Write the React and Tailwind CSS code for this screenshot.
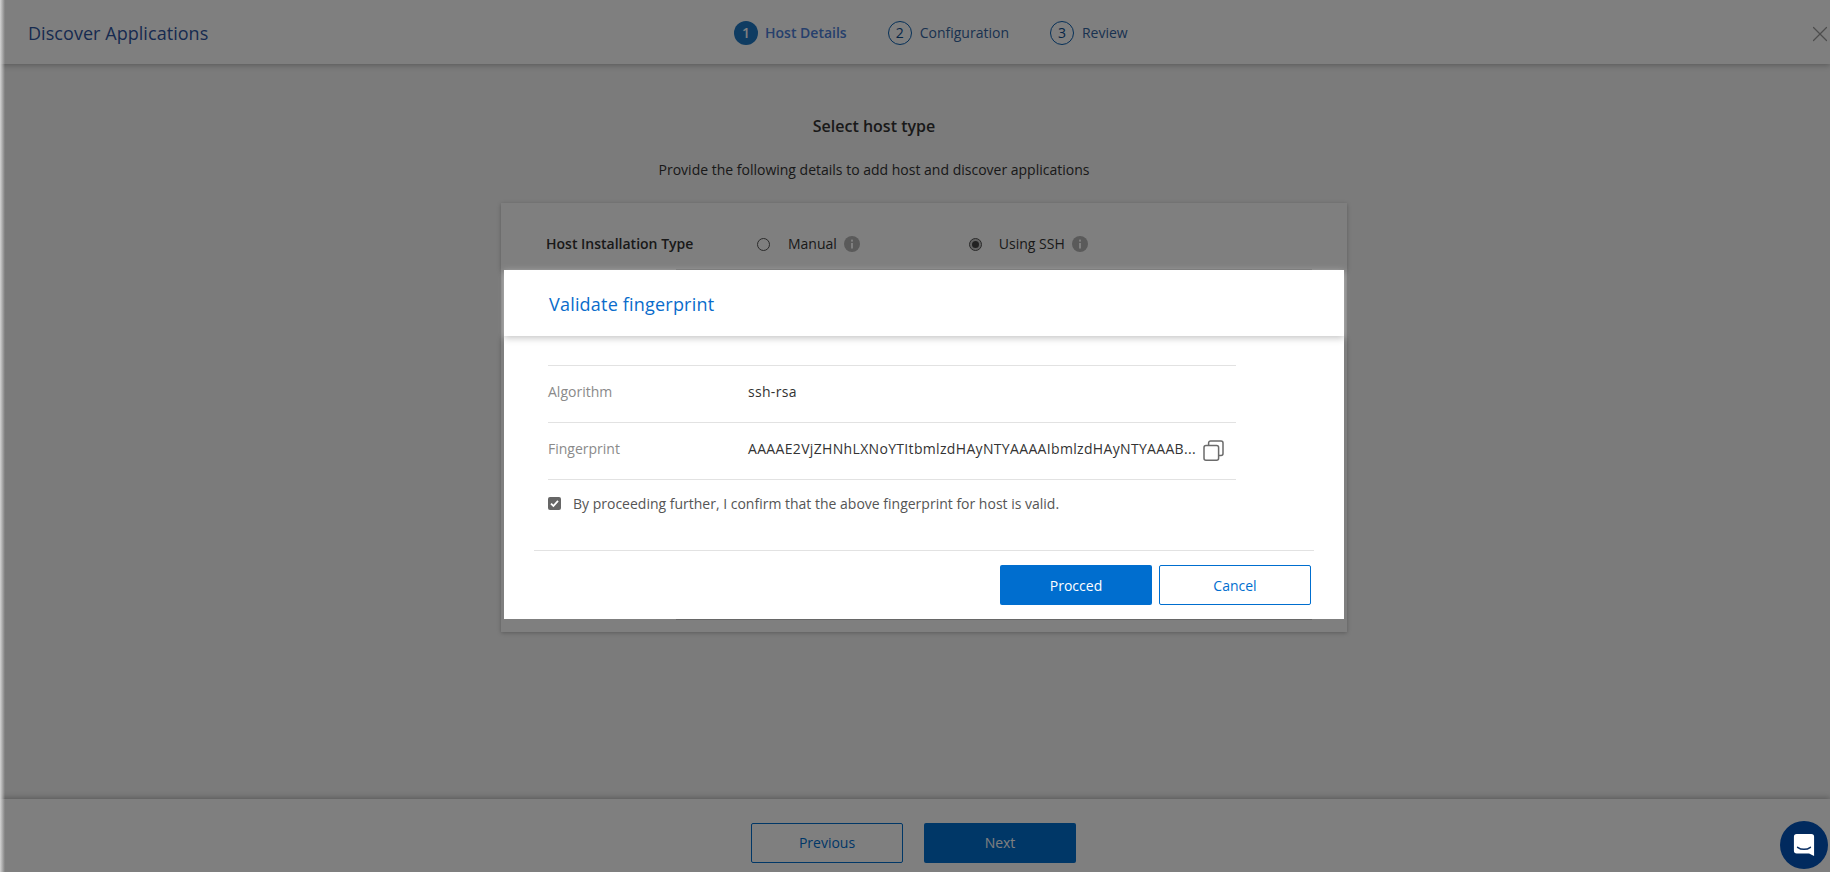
import { X } from "lucide-react";

const fingerprint = "AAAAE2VjZHNhLXNoYTItbmlzdHAyNTYAAAAIbmlzdHAyNTYAAAB...";

function Step({ num, label, active, textClass }) {
  return (
    <div className="flex items-center">
      <span
        className={`flex h-6 w-6 items-center justify-center rounded-full text-sm ${
          active ? "bg-[#1e78c4] font-semibold text-white" : "border-[1.5px] border-[#0b5fb0] text-[#0b4a8c]"
        }`}
      >
        {num}
      </span>
      <span className={`text-sm ${textClass}`}>{label}</span>
    </div>
  );
}

function InfoIcon() {
  return (
    <svg width="16" height="16" viewBox="0 0 16 16" className="shrink-0">
      <circle cx="8" cy="8" r="8" fill="#b4b4b4" />
      <rect x="7" y="7" width="2" height="5.5" fill="#ffffff" />
      <rect x="7" y="3.6" width="2" height="2" fill="#ffffff" />
    </svg>
  );
}

function Radio({ checked }) {
  return (
    <span
      className={`flex h-[13px] w-[13px] items-center justify-center rounded-full border border-[#555555] ${
        checked ? "bg-[#c4c4c4]" : "bg-white"
      }`}
    >
      {checked && <span className="h-[7px] w-[7px] rounded-full bg-[#444444]" />}
    </span>
  );
}

function CopyIcon() {
  return (
    <svg width="21" height="21" viewBox="0 0 21 21" fill="none" stroke="#6b6b6b" strokeWidth="1.5">
      <rect x="1" y="5.6" width="14.6" height="14.6" rx="2" />
      <path d="M5.6 5.6V3a2 2 0 0 1 2-2h10.4a2 2 0 0 1 2 2v10.4a2 2 0 0 1-2 2h-2.4" />
    </svg>
  );
}

function ChatIcon() {
  return (
    <svg width="22" height="24" viewBox="0 0 24 26">
      <path
        d="M4 1h16a3 3 0 0 1 3 3v21l-5.5-2.6H4a3 3 0 0 1-3-3V4a3 3 0 0 1 3-3z"
        fill="#ffffff"
      />
      <path d="M5 15.5c4 3 10 3 14 0" fill="none" stroke="#0a2f63" strokeWidth="1.6" strokeLinecap="round" />
    </svg>
  );
}

function Row({ label, children }) {
  return (
    <div className="flex h-[57px] items-center border-t border-[#e2e2e2] pb-[4px] text-sm">
      <span className="w-[200px] text-[#8a8a8a]">{label}</span>
      {children}
    </div>
  );
}

export default function App() {
  return (
    <div className="relative flex h-[872px] w-[1830px] flex-col overflow-hidden bg-[#f6f6f6] font-['Open_Sans',sans-serif] text-[#333333]">
      {/* top bar */}
      <header className="z-10 flex h-16 shrink-0 items-center bg-white pl-[28px] shadow-[0_1px_6px_rgba(0,0,0,0.3)]">
        <h1 className="mt-px w-[706px] text-lg font-medium tracking-[0.05px] text-[#2f55a0]">Discover Applications</h1>
        <div className="mt-px flex items-center">
          <div className="mr-[41px]">
            <Step num="1" label={<span className="ml-[7px] font-semibold">Host Details</span>} active textClass="text-[#4c80d8]" />
          </div>
          <div className="mr-[41px]">
            <Step num="2" label={<span className="ml-[8px]">Configuration</span>} textClass="text-[#34649f]" />
          </div>
          <Step num="3" label={<span className="ml-[8px]">Review</span>} textClass="text-[#34649f]" />
        </div>
        <X className="ml-auto mr-[-3px] mt-[4px] h-[26px] w-[26px] text-[#9a9a9a]" strokeWidth={1.1} />
      </header>

      {/* page body */}
      <main className="flex min-h-0 flex-1 flex-col">
        <div className="flex flex-col items-center pr-[82px]">
          <h2 className="mt-[52px] text-base font-semibold leading-5">Select host type</h2>
          <p className="mt-6 text-sm leading-5">Provide the following details to add host and discover applications</p>
        </div>
        <section className="relative ml-[501px] mt-[23px] h-[429px] w-[846px] bg-white pl-[45px] pt-[31px] shadow-[0_1px_4px_rgba(0,0,0,0.25)]">
          <div className="flex h-5 items-center text-sm">
            <span className="w-[211px] font-semibold">Host Installation Type</span>
            <Radio />
            <span className="ml-[18px]">Manual</span>
            <span className="ml-[7px]"><InfoIcon /></span>
            <span className="ml-[109px]"><Radio checked /></span>
            <span className="ml-[17px]">Using SSH</span>
            <span className="ml-[7px]"><InfoIcon /></span>
          </div>
          {/* form panel behind the modal */}
          <div className="absolute left-[175px] top-[66px] h-[351px] w-[636px] border-y border-[#cfcfcf]" />
        </section>
      </main>

      {/* bottom bar */}
      <footer className="z-10 flex h-[73px] shrink-0 items-start gap-[21px] bg-white pl-[751px] pt-[24px] shadow-[0_-1px_6px_rgba(0,0,0,0.3)]">
        <button className="h-10 w-[152px] rounded-[2px] border border-[#006ecf] text-sm text-[#006ecf]">Previous</button>
        <button className="h-10 w-[152px] rounded-[2px] bg-[#006ecf] text-sm text-white">Next</button>
      </footer>

      {/* backdrop + modal */}
      <div className="absolute inset-0 z-20 bg-black/50 pl-[504px] pt-[270px]">
        <div className="h-[349px] w-[840px] bg-white">
          <div className="flex h-[66px] items-center pl-[45px] shadow-[0_2px_7px_#c4c4c4]">
            <h3 className="mt-px text-lg font-medium tracking-[0.2px] text-[#0a6ccb]">Validate fingerprint</h3>
          </div>
          <div className="ml-[44px] mt-[29px] w-[688px]">
            <Row label="Algorithm">
              <span className="font-medium tracking-[0.3px]">ssh-rsa</span>
            </Row>
            <Row label="Fingerprint">
              <span className="font-medium tracking-[0.33px]">{fingerprint}</span>
              <span className="ml-[7px] mt-[3px]"><CopyIcon /></span>
            </Row>
            <div className="flex h-[52px] items-center border-t border-[#e2e2e2] pb-[4px] text-sm text-[#555555]">
              <span className="flex h-[13px] w-[13px] items-center justify-center rounded-[2px] bg-[#666666]">
                <svg width="11" height="11" viewBox="0 0 11 11" fill="none" stroke="#ffffff" strokeWidth="1.8">
                  <path d="M2 5.6 4.4 8 9 2.8" />
                </svg>
              </span>
              <span className="ml-[12px]">By proceeding further, I confirm that the above fingerprint for host is valid.</span>
            </div>
          </div>
          <div className="mx-[30px] mt-[19px] flex justify-end gap-[7px] border-t border-[#e2e2e2] pr-[3px] pt-[14px]">
            <button className="h-10 w-[152px] rounded-[2px] bg-[#006ecf] pt-px text-sm text-white">Procced</button>
            <button className="h-10 w-[152px] rounded-[2px] border border-[#006ecf] pt-px text-sm text-[#006ecf]">Cancel</button>
          </div>
        </div>
      </div>

      {/* light edge down the left side */}
      <div className="absolute inset-y-0 left-0 z-30 w-[5px] bg-gradient-to-r from-[#d4d4d4] to-transparent" />

      {/* chat launcher */}
      <button className="absolute bottom-[3px] right-[2px] z-30 flex h-12 w-12 items-center justify-center rounded-full bg-[#012a5e]">
        <ChatIcon />
      </button>
    </div>
  );
}
